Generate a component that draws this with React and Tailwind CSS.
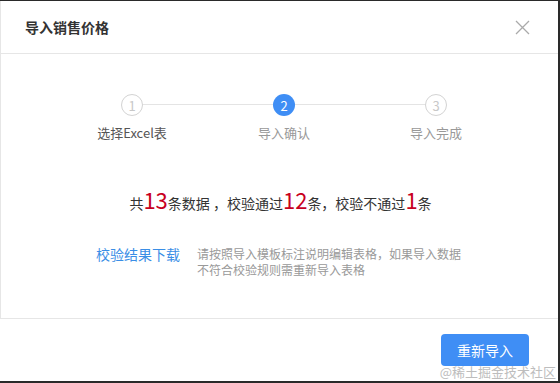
const steps = [
  { n: 1, label: "选择Excel表" },
  { n: 2, label: "导入确认" },
  { n: 3, label: "导入完成" },
];

const font = { fontFamily: '"Noto Sans CJK SC", "Noto Sans", sans-serif' };

const Step = ({ n, label, active, done }) => (
  <div className="flex flex-col items-center w-[120px] relative z-10">
    <div
      className={
        "w-[22px] h-[22px] rounded-full flex items-center justify-center text-[13px] leading-none " +
        (active
          ? "bg-[#3f8ef5] text-white"
          : "bg-white border border-[#d3d3d3] text-[#c8c8c8]")
      }
    >
      {n}
    </div>
    <div
      className={
        "mt-[7px] text-[13px] leading-[20px] " +
        (done ? "text-[#555]" : "text-[#999]")
      }
    >
      {label}
    </div>
  </div>
);

export default function App() {
  return (
    <div
      className="w-[560px] h-[383px] bg-white flex flex-col border-t border-r-2 border-b-2 border-[#2a2a2a] relative overflow-hidden"
      style={font}
    >
      <div className="h-[53px] flex items-center justify-between pl-[24px] pr-[28px] border-b border-l border-[#e6e6e6] shrink-0">
        <span className="text-[14px] font-bold text-[#333]">导入销售价格</span>
        <svg width="15" height="15" viewBox="0 0 15 15" className="text-[#aaa]">
          <path d="M1 1L14 14M14 1L1 14" stroke="currentColor" strokeWidth="1.3" />
        </svg>
      </div>

      <div className="flex-1 border-l border-[#e6e6e6] flex flex-col">
        <div className="relative flex justify-between w-[424px] ml-[71px] mt-[40px]">
          <div className="absolute top-[10px] left-[70px] right-[70px] h-px bg-[#e4e4e4]" />
          {steps.map((s) => (
            <Step key={s.n} n={s.n} label={s.label} active={s.n === 2} done={s.n === 1} />
          ))}
        </div>

        <div className="mt-[45px] flex items-baseline justify-center text-[14px] text-[#333] pl-[2px]">
          <span>共</span>
          <span className="text-[22px] text-[#c8001e] leading-none">13</span>
          <span>条数据 ，校验通过</span>
          <span className="text-[22px] text-[#c8001e] leading-none">12</span>
          <span>条，校验不通过</span>
          <span className="text-[22px] text-[#c8001e] leading-none">1</span>
          <span>条</span>
        </div>

        <div className="mt-[32px] flex pl-[95px]">
          <span className="text-[14px] leading-[16px] text-[#3a8ee6] w-[101px] shrink-0">校验结果下载</span>
          <p className="text-[12px] leading-[16px] text-[#999] w-[270px]">
            请按照导入模板标注说明编辑表格，如果导入数据不符合校验规则需重新导入表格
          </p>
        </div>
      </div>

      <div className="h-[63px] border-t border-[#e6e6e6] flex items-start justify-end pr-[29px] pt-[15px] shrink-0">
        <button className="w-[88px] h-[32px] rounded-[4px] bg-[#3f8ef5] text-white text-[14px]">
          重新导入
        </button>
      </div>

      <div className="absolute right-[2px] bottom-[3px] text-[13px] text-[#bdbdbd] leading-none">
        @稀土掘金技术社区
      </div>
    </div>
  );
}
